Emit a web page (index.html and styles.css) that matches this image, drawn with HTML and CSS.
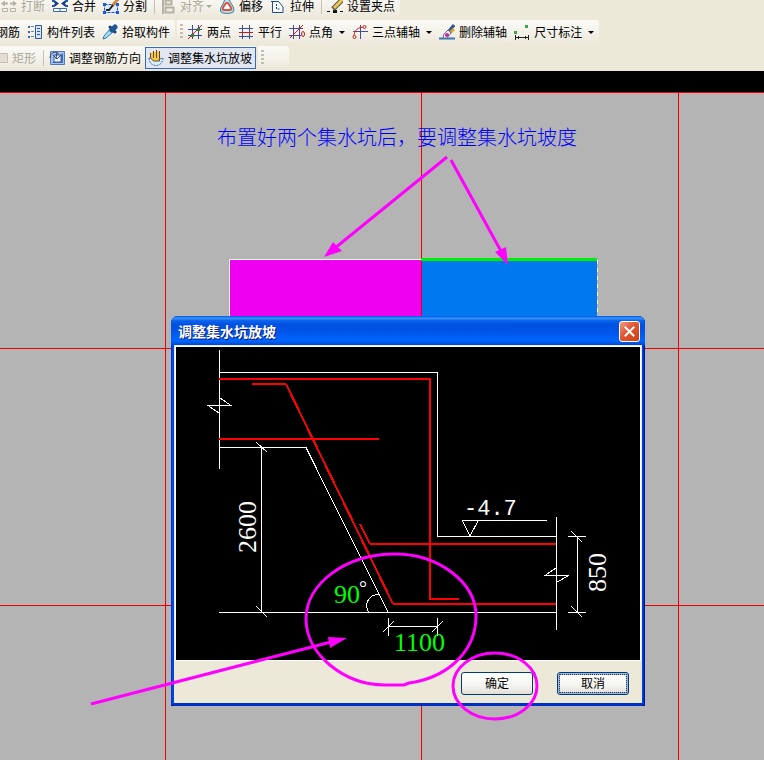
FILE: index.html
```html
<!DOCTYPE html>
<html lang="zh-CN">
<head>
<meta charset="utf-8">
<title>调整集水坑放坡</title>
<link rel="stylesheet" href="styles.css">
</head>
<body>
<header class="toolbars">
  <div class="strip strip-first">
    <button class="tool" disabled><svg class="icon" viewBox="0 0 16 16"><path d="M3 5.500h4M9 5.500h4" stroke="#b5b2a4" stroke-width="2"/><path d="m0 5.500 4-3v6zM16 5.500l-4-3v6z" fill="#b5b2a4"/><path d="M1.500 10.500h5v3h-5zM9.500 10.500h5v3h-5z" fill="#f4f2ea" stroke="#b5b2a4"/></svg>打断</button>
    <button class="tool"><svg class="icon" viewBox="0 0 16 16"><path d="M0 3h2l2 2.500L2 8H0M16 3h-2l-2 2.500L14 8h2" stroke="#2456a8" stroke-width="2"/><path d="m7 5.500-4-3v6zM9 5.500l4-3v6z" fill="#1d3c78"/><path d="M1.500 10.500h13v3h-13zM8 10.500v3" fill="#fff" stroke="#3c6aa8"/></svg>合并</button>
    <button class="tool"><svg class="icon" viewBox="0 0 16 16"><path d="M1.500 6.500h13v8h-13z" fill="#dcebff" stroke="#1956e0" stroke-dasharray="3 1"/><path d="M0 13h3v3H0zM13 13h3v3h-3zM0 5h3v3H0zM13 5h3v3h-3z" fill="#1956e0"/><path d="M15 1 9 8" stroke="#c68b3e" stroke-width="3"/><path d="M10 7 6 12H3" stroke="#222" stroke-width="2"/></svg>分割</button>
    <span class="sep"></span>
    <button class="tool" disabled><svg class="icon" viewBox="0 0 16 16"><path d="M3 0v16" stroke="#b5b2a4" stroke-width="2"/><path d="M5.500 2.500h6v4h-6zM5.500 9.500h8v5h-8z" fill="#eeece2" stroke="#b5b2a4" stroke-width="2"/></svg>对齐<span class="caret caret-near"></span></button>
    <button class="tool"><svg class="icon" viewBox="0 0 16 16"><path d="M8 1c3 0 3 3 4.500 5S16 12 14 14 2 16 1.500 13 3 8 4 6s1-5 4-5z" fill="#b9dced" stroke="#387894"/><path d="M8 5c2 0 2 2 3 3s2 4 0 4H5c-2 0-1-3 0-4s1-3 3-3z" fill="#fff" stroke="#d9553f" stroke-width="2"/></svg>偏移</button>
    <button class="tool"><svg class="icon" viewBox="0 0 16 16"><path d="M1 3.500h8M2.500 3v11.500H13V9L9 4" fill="#fff" stroke="#1d4f8c"/><path d="M6.500 6v5h4" fill="none" stroke="#1d4f8c" stroke-dasharray="2 1"/></svg>拉伸</button>
    <span class="sep"></span>
    <button class="tool tool-last"><svg class="icon" viewBox="0 0 16 16"><path d="M0 13.500h3M13 13.500h3" stroke="#111"/><path d="M6 12h4v3H6z" fill="#111"/><path d="m15 2-9 9" stroke="#555" stroke-width="5"/><path d="m15 2-8 8" stroke="#efc94e" stroke-width="3"/></svg>设置夹点</button>
  </div>
  <div class="line">
    <div class="strip strip-clipped">
      <button class="tool">钢筋</button>
      <button class="tool"><svg class="icon" viewBox="0 0 16 16"><path d="M1 3h2M1 8h2M1 13h2" stroke="#3865a8" stroke-width="2"/><path d="M4 2.500h3M4 7.500h3M4 12.500h3" stroke="#6f87ad"/><path d="M8.500 1.500h6v13h-6z" fill="#d5e5fa" stroke="#335690"/><path d="M10 4.500h3M10 7.500h3M10 10.500h3" stroke="#335690"/></svg>构件列表</button>
      <button class="tool tool-last"><svg class="icon" viewBox="0 0 16 16"><path d="m8 5-6 7-1 3 3-1 7-6" fill="#a9def4" stroke="#2f78ae"/><path d="m8 3 5 5" stroke="#153d77" stroke-width="3" stroke-linecap="round"/><path d="m10 6 3-3" stroke="#1f5796" stroke-width="5" stroke-linecap="round"/></svg>拾取构件</button>
    </div>
    <div class="strip">
      <span class="grip"></span>
      <button class="tool"><svg class="icon" viewBox="0 0 16 16"><path d="M5.500 1v14M11.500 1v14M1 5.500h14M1 11.500h14" stroke="#3e4c9a"/><path d="M1 15 15 1" stroke="#d01818"/><path d="M4 10h3v3H4zM10 4h3v3h-3z" fill="#35852d"/></svg>两点</button>
      <button class="tool"><svg class="icon" viewBox="0 0 16 16"><path d="M4.500 1v14M11.500 1v14M1 4.500h14M1 12.500h14" stroke="#3e4c9a"/><path d="M1 8.500h14" stroke="#d01818"/></svg>平行</button>
      <button class="tool"><svg class="icon" viewBox="0 0 16 16"><path d="M4.500 1v14M10.500 1v14M0 4.500h14M0 11.500h12" stroke="#3e4c9a"/><path d="M1 14 14 1" stroke="#d01818"/><ellipse cx="14" cy="10" rx="1.500" ry="2.500" fill="none" stroke="#d01818"/></svg>点角<span class="caret"></span></button>
      <button class="tool"><svg class="icon" viewBox="0 0 16 16"><path d="M8.500 1v14M1 7.500h15" stroke="#3e4c9a"/><path d="M2 13C2 6 6 3 13 3" fill="none" stroke="#d01818"/><circle cx="2.500" cy="13" r="1.500" fill="#fff" stroke="#d01818"/><circle cx="12.500" cy="3" r="1.500" fill="#fff" stroke="#d01818"/></svg>三点辅轴<span class="caret"></span></button>
      <button class="tool"><svg class="icon" viewBox="0 0 16 16"><path d="M0 14.500h16" stroke="#3a76b0" stroke-width="2"/><path d="m15 1-5 6" stroke="#34549a" stroke-width="3"/><path d="m15 5-4 4" stroke="#e2a32d" stroke-width="3"/><path d="m9 6 3 3-4 5H4l1-4z" fill="#eee" stroke="#68729c"/><circle cx="8" cy="11" r="2" fill="#c92ca4"/></svg>删除辅轴</button>
      <button class="tool tool-last"><svg class="icon" viewBox="0 0 16 16"><path d="M0 7h3v3H0zM11 1h3v3h-3z" fill="#3ba646"/><path d="M1.500 11v5M14.500 11v5M2 13.500h12M4.500 12v3M11.500 12v3" stroke="#222"/></svg>尺寸标注<span class="caret"></span></button>
    </div>
  </div>
  <div class="line">
    <div class="strip strip-rect">
      <button class="tool" disabled><svg class="icon" viewBox="0 0 16 16"><path d="M1.500 3.500h14v9h-14z" fill="#e2dfd2" stroke="#c4c1b2"/></svg>矩形</button>
      <span class="sep"></span>
      <button class="tool tool-last"><svg class="icon" viewBox="0 0 16 16"><path d="M1.500 1.500h14v13h-14z" fill="#a9c3ef" stroke="#5579b4"/><path d="M3 13 14 3v10z" fill="#3f6fc4"/><path d="M5 5h7v7H5z" fill="#eef4ff" stroke="#3c5f9c"/><path d="M1 8c0-6 7-8 9-3M8 2 7 9M4 5l4 4 4-4" fill="none" stroke="#33476e"/></svg>调整钢筋方向</button>
      <button class="tool tool-active" aria-pressed="true"><svg class="icon" viewBox="0 0 16 16"><path d="M1 8c0 10 14 10 14 0l-4 1H5z" fill="#d9efff" stroke="#3a70bb" stroke-dasharray="2 1"/><path d="M2.500 3v5l3 3h6V1M5.500 1v7M8.500 0v8" fill="#f7c64d" stroke="#654b18"/></svg>调整集水坑放坡</button>
    </div>
    <div class="strip strip-empty"><span class="grip"></span></div>
  </div>
</header>

<main class="stage">
  <svg class="plan" aria-hidden="true">
    <rect width="100%" height="21"/>
    <rect fill="#f000f0" x="229" y="188" width="193" height="90"/>
    <path d="M229.500 278V188.500H421" fill="none" stroke="#fff"/>
    <rect fill="#0078f0" x="422" y="188" width="175" height="90"/>
    <path d="M597.500 189v89" stroke="#fff" stroke-dasharray="4 4"/>
    <g class="axes">
      <path d="M165.500 22v2000M421.500 22v2000M678.500 22v2000"/>
      <line x1="0" x2="100%" y1="21.500" y2="21.500"/>
      <line x1="0" x2="100%" y1="277.500" y2="277.500"/>
      <line x1="0" x2="100%" y1="534.500" y2="534.500"/>
    </g>
    <rect fill="#00f000" x="421" y="187" width="176" height="3"/>
  </svg>
  <p class="caption">布置好两个集水坑后，要调整集水坑坡度</p>

  <section class="dialog" role="dialog" aria-labelledby="dialog-title">
    <div class="titlebar">
      <h1 id="dialog-title">调整集水坑放坡</h1>
      <button class="close" aria-label="关闭"><svg viewBox="0 0 20 20"><path d="m5 5 10 10M15 5 5 15" stroke="#fff" stroke-width="2"/></svg></button>
    </div>
    <div class="dialog-body">
      <svg class="section" viewBox="176 347 464 313">
        <g class="outline">
          <path d="M219.500 350v119M219 372.500H437.500V536.500H556M219 447.500H306L388 612M219 612.500H556M556.500 517v113"/>
          <path d="M220 398l11 7.500H208l11 7.500M556 568l-11 7.500h24l-12 6.500"/>
          <path d="M261.500 448v164M256 442l11 10M256 606l11 11"/>
          <path d="M462 520.500h85M462.500 521l7.500 15 8-15"/>
          <path d="M568 536.500h18M568 612.500h18M577.500 537v75M571 531l11 11M571 606l11 11"/>
          <path d="M388.500 618v18M437.500 618v18M389 626.500h48M383 632l11-11M432 632l11-11"/>
          <path d="M368.500 612c-5-9 1-18 11-17.500"/>
        </g>
        <g class="rebar">
          <path d="M219 379H430V599h29M252 384h34M219 439h160M370 544h186M393 604h163"/>
          <path d="M286 384 393 604M360 524l10 20"/>
        </g>
        <text class="dim" transform="translate(256 553) rotate(-90)">2600</text>
        <text class="dim" transform="translate(606 592) rotate(-90)">850</text>
        <text class="dim level" x="464" y="515">-4.7</text>
        <text class="dim editable" x="334" y="603">90</text>
        <text class="dim degree" x="359" y="595">°</text>
        <text class="dim editable" x="394" y="651">1100</text>
      </svg>
      <div class="actions">
        <button class="push">确定</button>
        <button class="push push-focus">取消</button>
      </div>
    </div>
  </section>
</main>

<svg class="marks" aria-hidden="true">
  <path d="M447 157 335 248M451 160l51 93M91 704l240-62"/>
  <path d="M415 682C450 675 476 650 476 616C476 582 438 554 395 554C345 554 306 584 306 619C306 655 345 685 385 685L404 685L409 683Z"/>
  <ellipse cx="495" cy="686" rx="42" ry="33"/>
  <path class="head" d="m324 257 9-15 9 9zM508 265l-13-13 11-5zM347 638l-17 10-2-11z"/>
</svg>
</body>
</html>
```

FILE: styles.css
```css
* { box-sizing: border-box; }

body {
  margin: 0;
  position: relative;
  display: flex;
  flex-direction: column;
  min-height: 100vh;
  overflow: hidden;
  background: #b4b4b4;
  font: 12px/16px "Noto Sans CJK SC", sans-serif;
  color: #000;
}

button { font: inherit; color: inherit; }

.toolbars {
  display: flex;
  flex-direction: column;
  gap: 2px;
  padding-bottom: 1px;
  background: #ece9d8;
  overflow: hidden;
}

.line { display: flex; gap: 2px; }

.strip {
  display: flex;
  align-items: center;
  flex: none;
  align-self: flex-start;
  height: 24px;
  padding-right: 5px;
  border-radius: 0 3px 3px 0;
  background: linear-gradient(#fbfaf6, #f4f2ea 50%, #ebe8da);
}

.strip-first { margin-top: -6px; padding-left: 1px; }
.strip-clipped { margin-left: -4px; }
.strip-rect { margin-left: -8px; padding-right: 0; }
.strip-empty { width: 31px; }

.tool {
  display: flex;
  align-items: center;
  flex: none;
  gap: 4px;
  height: 22px;
  margin: 0 7px 0 0;
  padding: 0;
  border: 0;
  background: none;
  white-space: nowrap;
}

.tool:disabled { color: #aca899; }
.tool-last { margin-right: 0; }

.tool-active {
  margin-left: 4px;
  padding: 0 3px 0 2px;
  border: 1px solid #316ac5;
  background: #e1e6f0;
}

.tool-active { margin-right: 0; }

.icon { width: 16px; height: 16px; fill: none; }

.sep {
  width: 1px;
  height: 16px;
  margin-right: 5px;
  background: #c5c2b4;
}

.grip {
  width: 3px;
  height: 16px;
  margin: 0 4px 0 3px;
  background: repeating-linear-gradient(#c1beb0 0 2px, transparent 2px 4px);
}

.caret {
  margin-left: 2px;
  border: 3px solid transparent;
  border-top-color: currentColor;
  border-bottom: 0;
}

.caret-near { margin-left: -2px; }

.stage { position: relative; flex: 1; }

.plan, .marks {
  position: absolute;
  inset: 0;
  width: 100%;
  height: 100%;
}

.axes { stroke: #f00000; fill: none; }

.caption {
  position: relative;
  margin: 0;
  padding: 52px 0 0 217px;
  font-size: 20px;
  font-weight: 300;
  line-height: 28px;
  color: #0000ff;
}

.dialog {
  position: absolute;
  left: 171px;
  top: 245px;
  width: 474px;
  border-radius: 7px 7px 0 0;
  background: #0046e0;
  box-shadow: inset -1px -1px #001a98, inset 1px 0 #0831d9, inset -2px -2px #0030c8;
}

.titlebar {
  display: flex;
  align-items: center;
  justify-content: space-between;
  height: 29px;
  padding: 2px 5px 0 7px;
  border-radius: 7px 7px 0 0;
  background: linear-gradient(#0058e6, #3a93ff 8%, #0a63ee 16%, #0050e0 30%, #0055e8 55%, #0066ff 85%, #0048d4);
}

.titlebar h1 {
  margin: 0;
  padding-bottom: 2px;
  font-size: 14px;
  font-weight: 700;
  line-height: 20px;
  color: #fff;
  text-shadow: 1px 1px #0a1883;
}

.close {
  width: 21px;
  height: 21px;
  padding: 0;
  border: 1px solid #fff;
  border-radius: 3px;
  background: linear-gradient(135deg, #f0a088, #e0593a 40%, #d0400e);
}

.close svg { display: block; width: 19px; height: 19px; }

.dialog-body {
  margin: 0 3px;
  padding: 2px 2px 0;
  border-bottom: 3px solid #0030c8;
  background: #ece9d8;
}

.section {
  display: block;
  width: 100%;
  background: #000;
  outline: 1px solid #fff;
}

.outline { fill: none; stroke: #fff; shape-rendering: crispEdges; }
.rebar { fill: none; stroke: #ff0000; stroke-width: 2; shape-rendering: crispEdges; }

.dim { font: 26px "Liberation Serif", serif; fill: #fff; }
.level { font: 22px "Liberation Mono", monospace; }
.degree { font-size: 20px; }
.editable { fill: #00ff00; }

.actions {
  display: flex;
  justify-content: flex-end;
  gap: 24px;
  padding: 12px 11px 8px;
}

.push {
  width: 72px;
  height: 23px;
  padding: 0 0 2px;
  border: 1px solid #003c74;
  border-radius: 3px;
  background: linear-gradient(#ffffff, #f4f4f0 60%, #e2dfd6);
  line-height: 18px;
}

.push-focus {
  box-shadow: inset 0 0 0 2px #98b8ea;
  outline: 1px dotted #333;
  outline-offset: -3px;
}

.marks { fill: none; stroke: #ff00ff; stroke-width: 3; pointer-events: none; }
.head { fill: #ff00ff; stroke: none; }
```
